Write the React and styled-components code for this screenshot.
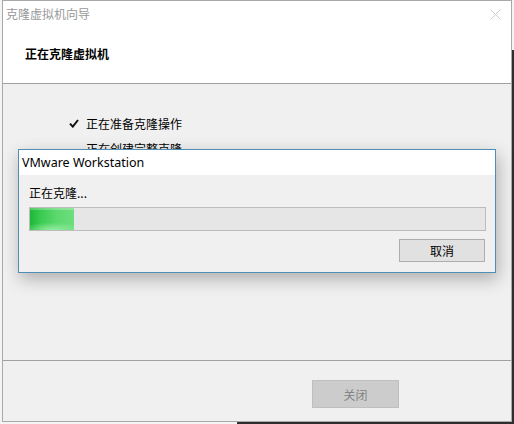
import React from "react";
import styled, { createGlobalStyle } from "styled-components";

const Global = createGlobalStyle`
  html, body { margin: 0; padding: 0; background: #f3f3f3; }
  body { font-family: "Noto Sans CJK SC", "Noto Sans", sans-serif; }
`;

const Desktop = styled.div`
  position: relative;
  width: 514px;
  height: 424px;
  overflow: hidden;
  background: #f4f4f4;
`;

const DarkEdge = styled.div`
  position: absolute;
  background: #2e2e2e;
  ${(p) => p.$side === "right" && "right: 0; top: 50px; width: 3px; bottom: 0;"}
  ${(p) => p.$side === "bottom" && "left: 237px; bottom: 0; height: 2px; right: 0;"}
`;

const Wizard = styled.div`
  position: absolute;
  left: 2px;
  top: 0;
  width: 510px;
  height: 422px;
  box-sizing: border-box;
  border: 1px solid #a9a9a9;
  background: #f0f0f0;
  display: flex;
  flex-direction: column;
`;

const TitleBar = styled.div`
  height: 25px;
  background: #fff;
  display: flex;
  align-items: center;
  justify-content: space-between;
  padding: 0 10px 0 3px;
`;

const TitleText = styled.span`
  font-size: 12px;
  line-height: 16px;
  color: ${(p) => p.$color || "#999"};
  font-family: ${(p) =>
    p.$latin
      ? `"Noto Sans", "Open Sans", sans-serif`
      : `"Noto Sans CJK SC", sans-serif`};
  ${(p) => p.$latin && "font-size: 12.5px;"}
`;

const CloseX = styled.svg`
  width: 11px;
  height: 11px;
  margin-top: 2px;
`;

const Header = styled.div`
  height: 58px;
  background: #fff;
  border-bottom: 1px solid #a0a0a0;
  display: flex;
  align-items: center;
  padding-left: 22px;
  padding-bottom: 1px;
  box-sizing: border-box;
`;

const HeaderTitle = styled.h1`
  margin: 0;
  font-size: 12px;
  font-weight: 700;
  color: #000;
  line-height: 16px;
`;

const Content = styled.div`
  flex: 1;
  padding: 27px 0 0 65px;
  display: flex;
  flex-direction: column;
`;

const Step = styled.div`
  display: flex;
  align-items: center;
  height: 25px;
  gap: 7px;
  font-size: 12px;
  color: #000;
`;

const CheckSlot = styled.span`
  width: 11px;
  display: flex;
  justify-content: center;
`;

const Footer = styled.div`
  height: 61px;
  border-top: 1px solid #a0a0a0;
  display: flex;
  justify-content: flex-end;
  align-items: flex-start;
  padding: 19px 112px 0 0;
  box-sizing: border-box;
`;

const Button = styled.button`
  box-sizing: border-box;
  width: ${(p) => p.$w}px;
  height: ${(p) => p.$h}px;
  margin: 0;
  padding: 0;
  font-family: "Noto Sans CJK SC", sans-serif;
  font-size: 12px;
  background: ${(p) => (p.disabled ? "#cccccc" : "#e1e1e1")};
  border: 1px solid ${(p) => (p.disabled ? "#bfbfbf" : "#adadad")};
  color: ${(p) => (p.disabled ? "#838383" : "#000")};
`;

const Dialog = styled.div`
  position: absolute;
  left: 18px;
  top: 149px;
  width: 478px;
  height: 124px;
  box-sizing: border-box;
  border: 1px solid #4f8fb5;
  background: #f0f0f0;
  box-shadow: 2px 6px 16px rgba(0, 0, 0, 0.28);
  display: flex;
  flex-direction: column;
`;

const DialogTitle = styled.div`
  height: 25px;
  background: #fff;
  display: flex;
  align-items: center;
  padding-left: 3px;
`;

const DialogBody = styled.div`
  padding: 10px 9px 0 10px;
  display: flex;
  flex-direction: column;
`;

const Status = styled.div`
  font-size: 12px;
  line-height: 16px;
  color: #000;
`;

const Track = styled.div`
  margin-top: 6px;
  height: 24px;
  box-sizing: border-box;
  border: 1px solid #bcbcbc;
  background: #e6e6e6;
  display: flex;
`;

const Fill = styled.div`
  height: 100%;
  background:
    radial-gradient(ellipse 70% 35% at 50% 100%, rgba(160, 240, 170, 0.85), rgba(160, 240, 170, 0) 100%),
    linear-gradient(90deg, #1fb838 0%, #3acb52 25%, #5bd86d 60%, #6ede7e 100%);
  box-shadow: inset 0 2px 0 rgba(255, 255, 255, 0.25);
`;

const ButtonRow = styled.div`
  margin-top: 8px;
  display: flex;
  justify-content: flex-end;
  padding-right: 1px;
`;

export default function App() {
  const progress = 44;
  return (
    <>
      <Global />
      <Desktop>
        <DarkEdge $side="right" />
        <DarkEdge $side="bottom" />
        <Wizard>
          <TitleBar>
            <TitleText>克隆虚拟机向导</TitleText>
            <CloseX viewBox="0 0 11 11">
              <path d="M0.5 0.5 L10.5 10.5 M10.5 0.5 L0.5 10.5" stroke="#cfcfcf" strokeWidth="1" />
            </CloseX>
          </TitleBar>
          <Header>
            <HeaderTitle>正在克隆虚拟机</HeaderTitle>
          </Header>
          <Content>
            <Step>
              <CheckSlot>
                <svg width="10" height="9" viewBox="0 0 10 9">
                  <path d="M1 4.6 L3.8 7.6 L9 1" stroke="#111" strokeWidth="2" fill="none" />
                </svg>
              </CheckSlot>
              <span>正在准备克隆操作</span>
            </Step>
            <Step>
              <CheckSlot />
              <span>正在创建完整克隆</span>
            </Step>
            <Step>
              <CheckSlot />
              <span>正在完成克隆操作</span>
            </Step>
          </Content>
          <Footer>
            <Button disabled $w={87} $h={28}>关闭</Button>
          </Footer>
        </Wizard>
        <Dialog>
          <DialogTitle>
            <TitleText $latin $color="#000">VMware Workstation</TitleText>
          </DialogTitle>
          <DialogBody>
            <Status>正在克隆...</Status>
            <Track>
              <Fill style={{ width: `${progress}px` }} />
            </Track>
            <ButtonRow>
              <Button $w={86} $h={23}>取消</Button>
            </ButtonRow>
          </DialogBody>
        </Dialog>
      </Desktop>
    </>
  );
}
